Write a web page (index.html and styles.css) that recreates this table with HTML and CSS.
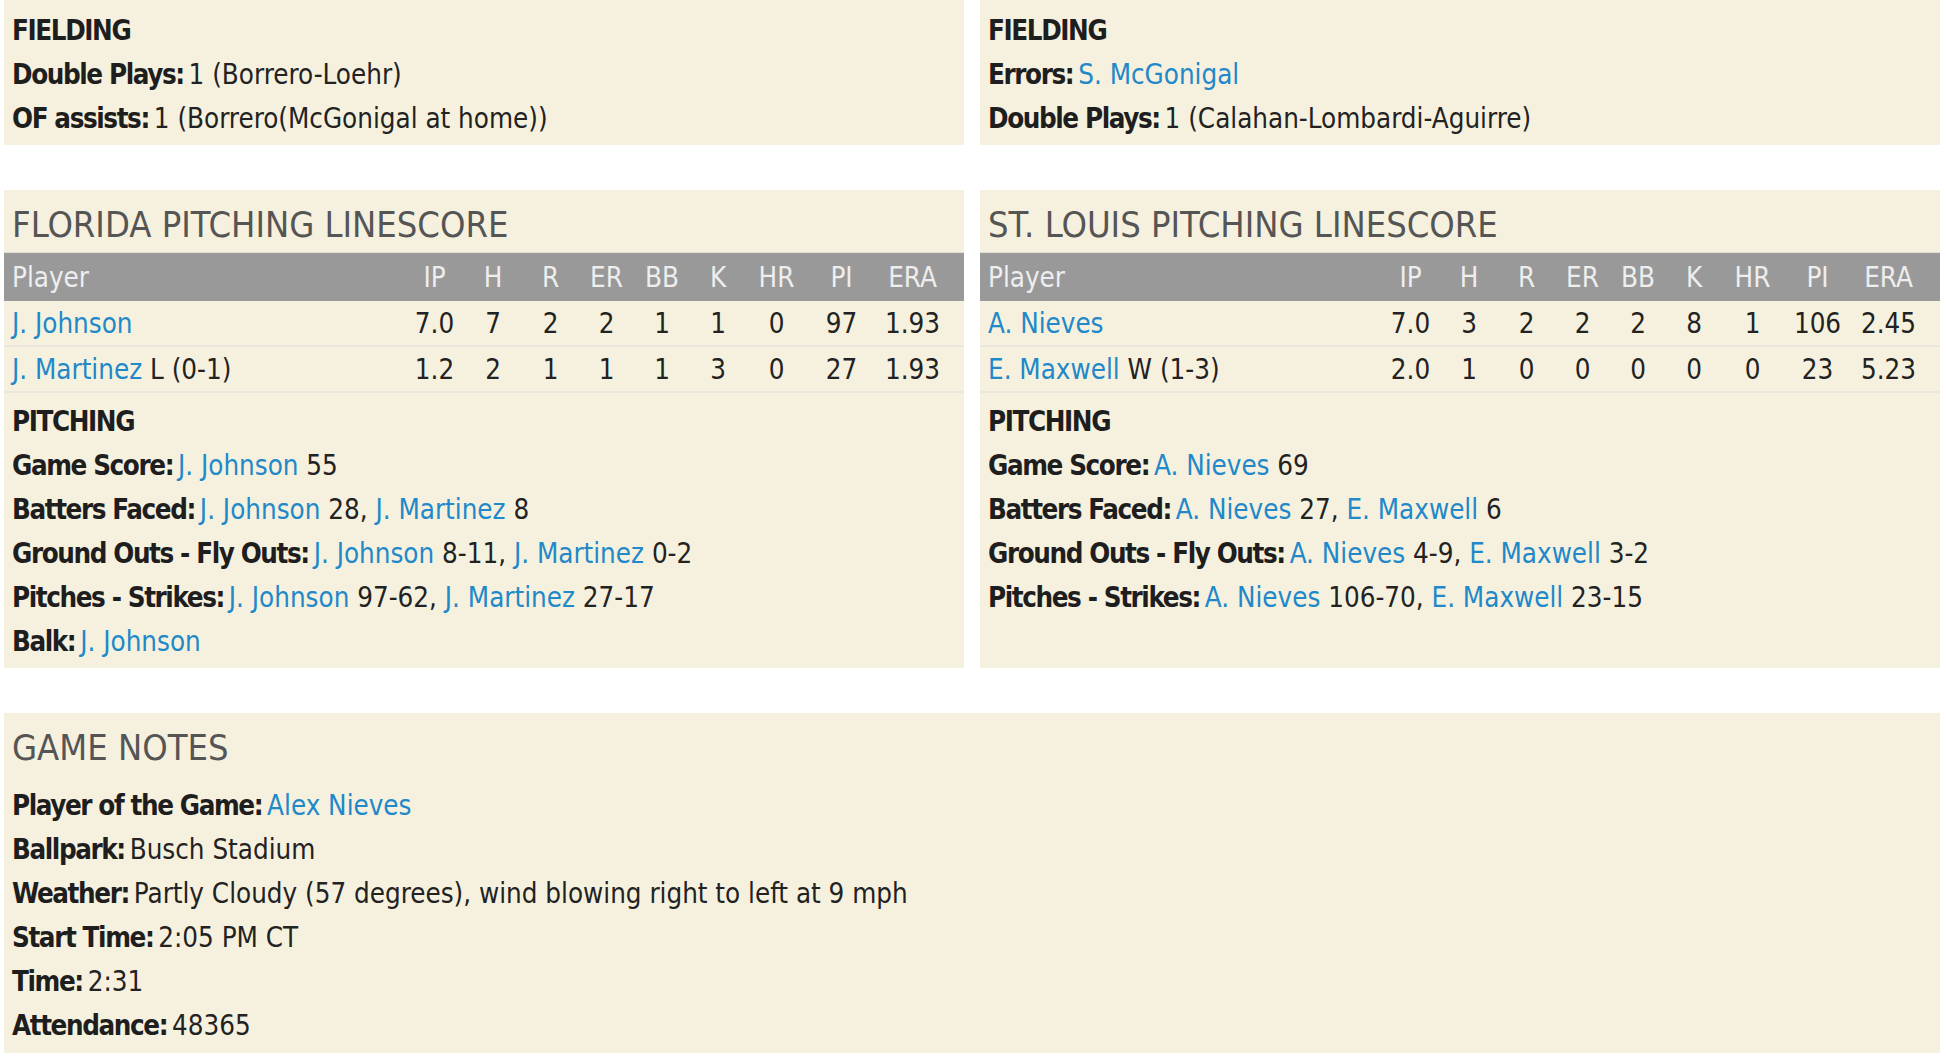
FILE: index.html
```html
<!DOCTYPE html>
<html>
<head>
<meta charset="utf-8">
<link rel="stylesheet" href="styles.css">
</head>
<body>
<div class="page">
  <div class="pair pair-top">
    <div class="panel fielding">
      <div class="line"><b>FIELDING</b></div>
      <div class="line"><b>Double Plays:</b> 1 (Borrero-Loehr)</div>
      <div class="line"><b>OF assists:</b> 1 (Borrero(McGonigal at home))</div>
    </div>
    <div class="panel fielding">
      <div class="line"><b>FIELDING</b></div>
      <div class="line"><b>Errors:</b> <a href="#">S. McGonigal</a></div>
      <div class="line"><b>Double Plays:</b> 1 (Calahan-Lombardi-Aguirre)</div>
    </div>
  </div>

  <div class="pair pair-pitch">
    <div class="panel pitching">
      <h2 class="title">FLORIDA PITCHING LINESCORE</h2>
      <table class="ls">
        <thead>
          <tr><th class="pl">Player</th><th class="c-ip">IP</th><th class="c-h">H</th><th class="c-r">R</th><th class="c-er">ER</th><th class="c-bb">BB</th><th class="c-k">K</th><th class="c-hr">HR</th><th class="c-pi">PI</th><th class="c-era">ERA</th></tr>
        </thead>
        <tbody>
          <tr><td class="pl"><a href="#">J. Johnson</a></td><td>7.0</td><td>7</td><td>2</td><td>2</td><td>1</td><td>1</td><td>0</td><td>97</td><td class="c-era">1.93</td></tr>
          <tr><td class="pl"><a href="#">J. Martinez</a> L (0-1)</td><td>1.2</td><td>2</td><td>1</td><td>1</td><td>1</td><td>3</td><td>0</td><td>27</td><td class="c-era">1.93</td></tr>
        </tbody>
      </table>
      <div class="notes">
        <div class="line"><b>PITCHING</b></div>
        <div class="line"><b>Game Score:</b> <a href="#">J. Johnson</a> 55</div>
        <div class="line"><b>Batters Faced:</b> <a href="#">J. Johnson</a> 28, <a href="#">J. Martinez</a> 8</div>
        <div class="line"><b>Ground Outs - Fly Outs:</b> <a href="#">J. Johnson</a> 8-11, <a href="#">J. Martinez</a> 0-2</div>
        <div class="line"><b>Pitches - Strikes:</b> <a href="#">J. Johnson</a> 97-62, <a href="#">J. Martinez</a> 27-17</div>
        <div class="line"><b>Balk:</b> <a href="#">J. Johnson</a></div>
      </div>
    </div>
    <div class="panel pitching">
      <h2 class="title">ST. LOUIS PITCHING LINESCORE</h2>
      <table class="ls">
        <thead>
          <tr><th class="pl">Player</th><th class="c-ip">IP</th><th class="c-h">H</th><th class="c-r">R</th><th class="c-er">ER</th><th class="c-bb">BB</th><th class="c-k">K</th><th class="c-hr">HR</th><th class="c-pi">PI</th><th class="c-era">ERA</th></tr>
        </thead>
        <tbody>
          <tr><td class="pl"><a href="#">A. Nieves</a></td><td>7.0</td><td>3</td><td>2</td><td>2</td><td>2</td><td>8</td><td>1</td><td>106</td><td class="c-era">2.45</td></tr>
          <tr><td class="pl"><a href="#">E. Maxwell</a> W (1-3)</td><td>2.0</td><td>1</td><td>0</td><td>0</td><td>0</td><td>0</td><td>0</td><td>23</td><td class="c-era">5.23</td></tr>
        </tbody>
      </table>
      <div class="notes">
        <div class="line"><b>PITCHING</b></div>
        <div class="line"><b>Game Score:</b> <a href="#">A. Nieves</a> 69</div>
        <div class="line"><b>Batters Faced:</b> <a href="#">A. Nieves</a> 27, <a href="#">E. Maxwell</a> 6</div>
        <div class="line"><b>Ground Outs - Fly Outs:</b> <a href="#">A. Nieves</a> 4-9, <a href="#">E. Maxwell</a> 3-2</div>
        <div class="line"><b>Pitches - Strikes:</b> <a href="#">A. Nieves</a> 106-70, <a href="#">E. Maxwell</a> 23-15</div>
      </div>
    </div>
  </div>

  <div class="panel game-notes">
    <h2 class="title">GAME NOTES</h2>
    <div class="notes">
      <div class="line"><b>Player of the Game:</b> <a href="#">Alex Nieves</a></div>
      <div class="line"><b>Ballpark:</b> Busch Stadium</div>
      <div class="line"><b>Weather:</b> Partly Cloudy (57 degrees), wind blowing right to left at 9 mph</div>
      <div class="line"><b>Start Time:</b> 2:05 PM CT</div>
      <div class="line"><b>Time:</b> 2:31</div>
      <div class="line"><b>Attendance:</b> 48365</div>
    </div>
  </div>
</div>
</body>
</html>
```

FILE: styles.css
```css
html, body {
  margin: 0;
  padding: 0;
  background: #ffffff;
}

body {
  font-family: "DejaVu Sans Condensed", "Liberation Sans", sans-serif;
  font-size: 27.5px;
  color: #222222;
}

a {
  color: #2188c9;
  text-decoration: none;
}

b {
  font-weight: bold;
  color: #1e1e1e;
  letter-spacing: -1.4px;
  margin-right: -3px;
}

.page {
  width: 1936px;
  padding: 0 6px 0 4px;
  display: flex;
  flex-direction: column;
}

.pair {
  display: grid;
  grid-template-columns: 960px 960px;
  column-gap: 16px;
}

.pair-pitch {
  margin-top: 45px;
}

.panel {
  background: #f6f1de;
}

.fielding {
  padding: 8px 8px 5px 8px;
}

.line {
  height: 44px;
  line-height: 44px;
  white-space: nowrap;
}

.pitching {
  padding: 8px 0 5px 0;
}

.title {
  margin: 0;
  padding: 0 8px;
  height: 54px;
  line-height: 54px;
  font-size: 36px;
  font-weight: normal;
  color: #555555;
  white-space: nowrap;
}

.ls {
  width: 100%;
  border-collapse: collapse;
  table-layout: fixed;
}

.ls th {
  background: #999999;
  color: #eeeeee;
  font-weight: normal;
  height: 48px;
  padding: 0;
  text-align: center;
  border-top: 1px solid #e2ded2;
}

.ls td {
  height: 44px;
  padding: 0;
  text-align: center;
  border-bottom: 2px solid #e9e6de;
  white-space: nowrap;
}

.ls .pl {
  text-align: left;
  padding-left: 8px;
}

.c-ip { width: 59px; }
.c-h { width: 58px; }
.c-r { width: 57px; }
.c-er { width: 55px; }
.c-bb { width: 56px; }
.c-k { width: 56px; }
.c-hr { width: 61px; }
.c-pi { width: 69px; }

.ls .c-era {
  width: 73px;
  padding-right: 15px;
}

.pitching .notes {
  margin-top: 6px;
  padding: 0 8px;
}

.game-notes {
  margin-top: 45px;
  padding: 7px 8px 6px 8px;
}

.game-notes .title {
  padding: 0;
  height: 56px;
  line-height: 56px;
}

.game-notes .notes {
  margin-top: 7px;
}
```
